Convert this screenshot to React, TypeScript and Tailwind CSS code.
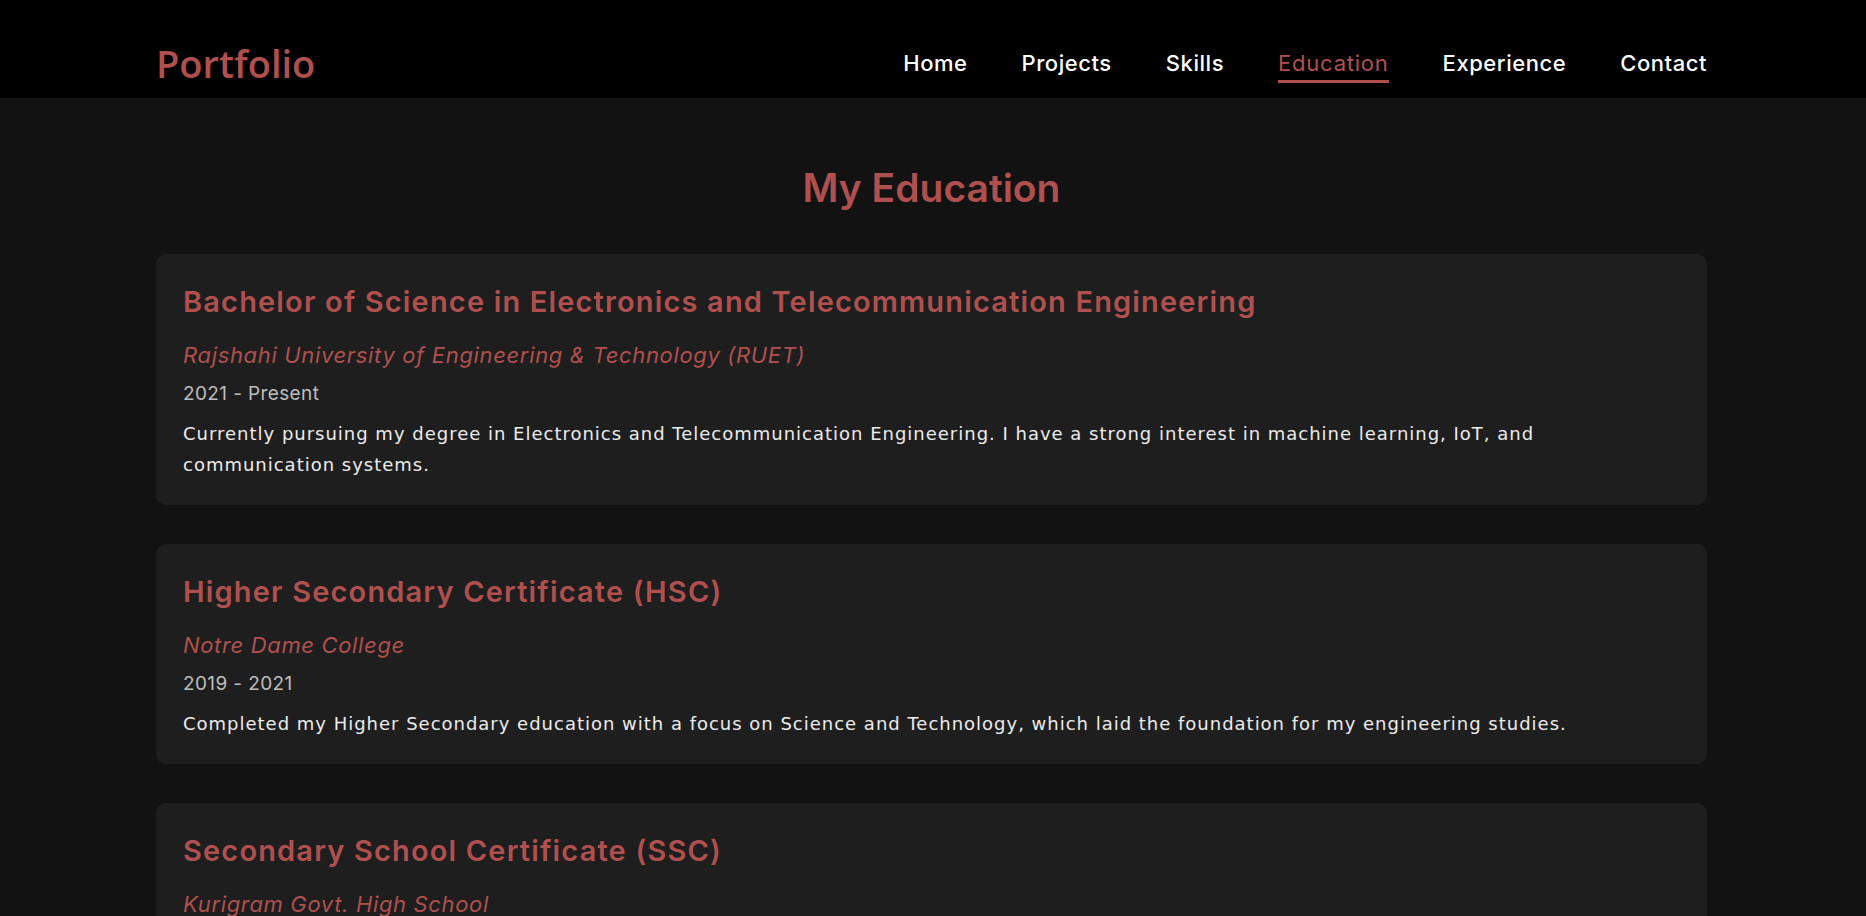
const navLinks = ["Home", "Projects", "Skills", "Education", "Experience", "Contact"];

type EducationItem = {
  degree: string;
  institution: string;
  years: string;
  description: string;
};

const education: EducationItem[] = [
  {
    degree: "Bachelor of Science in Electronics and Telecommunication Engineering",
    institution: "Rajshahi University of Engineering & Technology (RUET)",
    years: "2021 - Present",
    description:
      "Currently pursuing my degree in Electronics and Telecommunication Engineering. I have a strong interest in machine learning, IoT, and communication systems.",
  },
  {
    degree: "Higher Secondary Certificate (HSC)",
    institution: "Notre Dame College",
    years: "2019 - 2021",
    description:
      "Completed my Higher Secondary education with a focus on Science and Technology, which laid the foundation for my engineering studies.",
  },
  {
    degree: "Secondary School Certificate (SSC)",
    institution: "Kurigram Govt. High School",
    years: "2014 - 2019",
    description:
      "Completed my Secondary School education with excellent results in Science.",
  },
];

const Header = () => {
  return (
    <header className="h-[98px] bg-black">
      <div className="ml-[156px] mr-[159px] h-full pt-[30px] flex items-center justify-between">
        <a className="text-[38px] leading-[1.2] font-semibold text-[#b0504e] font-['Open_Sans',sans-serif]">
          Portfolio
        </a>
        <nav className="flex items-center gap-[54px]">
          {navLinks.map((link) => (
            <a
              key={link}
              className={
                link === "Education"
                  ? "relative text-[22px] leading-[1.45] tracking-[0.035em] font-normal text-[#b0504e]"
                  : "relative text-[22px] leading-[1.45] tracking-[0.025em] font-medium text-white"
              }
            >
              {link}
              {link === "Education" && (
                <span className="absolute left-0 right-0 top-full h-[3px] bg-[#b0504e]" />
              )}
            </a>
          ))}
        </nav>
      </div>
    </header>
  );
};

const EducationCard = ({ item }: { item: EducationItem }) => {
  return (
    <div className="bg-[#1e1e1e] rounded-[10px] px-[27px] pt-[31px] pb-[25px]">
      <h3 className="text-[29px] leading-[1.2] tracking-[0.04em] font-semibold text-[#b0504e]">
        {item.degree}
      </h3>
      <p className="mt-[19px] text-[22px] leading-[1.5] tracking-[0.03em] italic text-[#b0504e]">
        {item.institution}
      </p>
      <p className="mt-[8px] text-[19px] leading-[1.5] tracking-[0.02em] text-[#bdbdbd]">
        {item.years}
      </p>
      <p className="mt-[10px] max-w-[1460px] text-[18px] leading-[31px] tracking-[0.055em] text-[#ececec] font-['DejaVu_Sans',sans-serif]">
        {item.description}
      </p>
    </div>
  );
};

export default function App() {
  return (
    <div className="min-h-screen bg-[#121212] font-['Inter',sans-serif]">
      <Header />
      <section className="ml-[156px] mr-[159px] pt-[67px] pb-10">
        <h2 className="text-center text-[39px] leading-[1.2] font-semibold text-[#b0504e]">
          My Education
        </h2>
        <div className="mt-[42px] flex flex-col gap-[39px]">
          {education.map((item) => (
            <EducationCard key={item.degree} item={item} />
          ))}
        </div>
      </section>
    </div>
  );
}
